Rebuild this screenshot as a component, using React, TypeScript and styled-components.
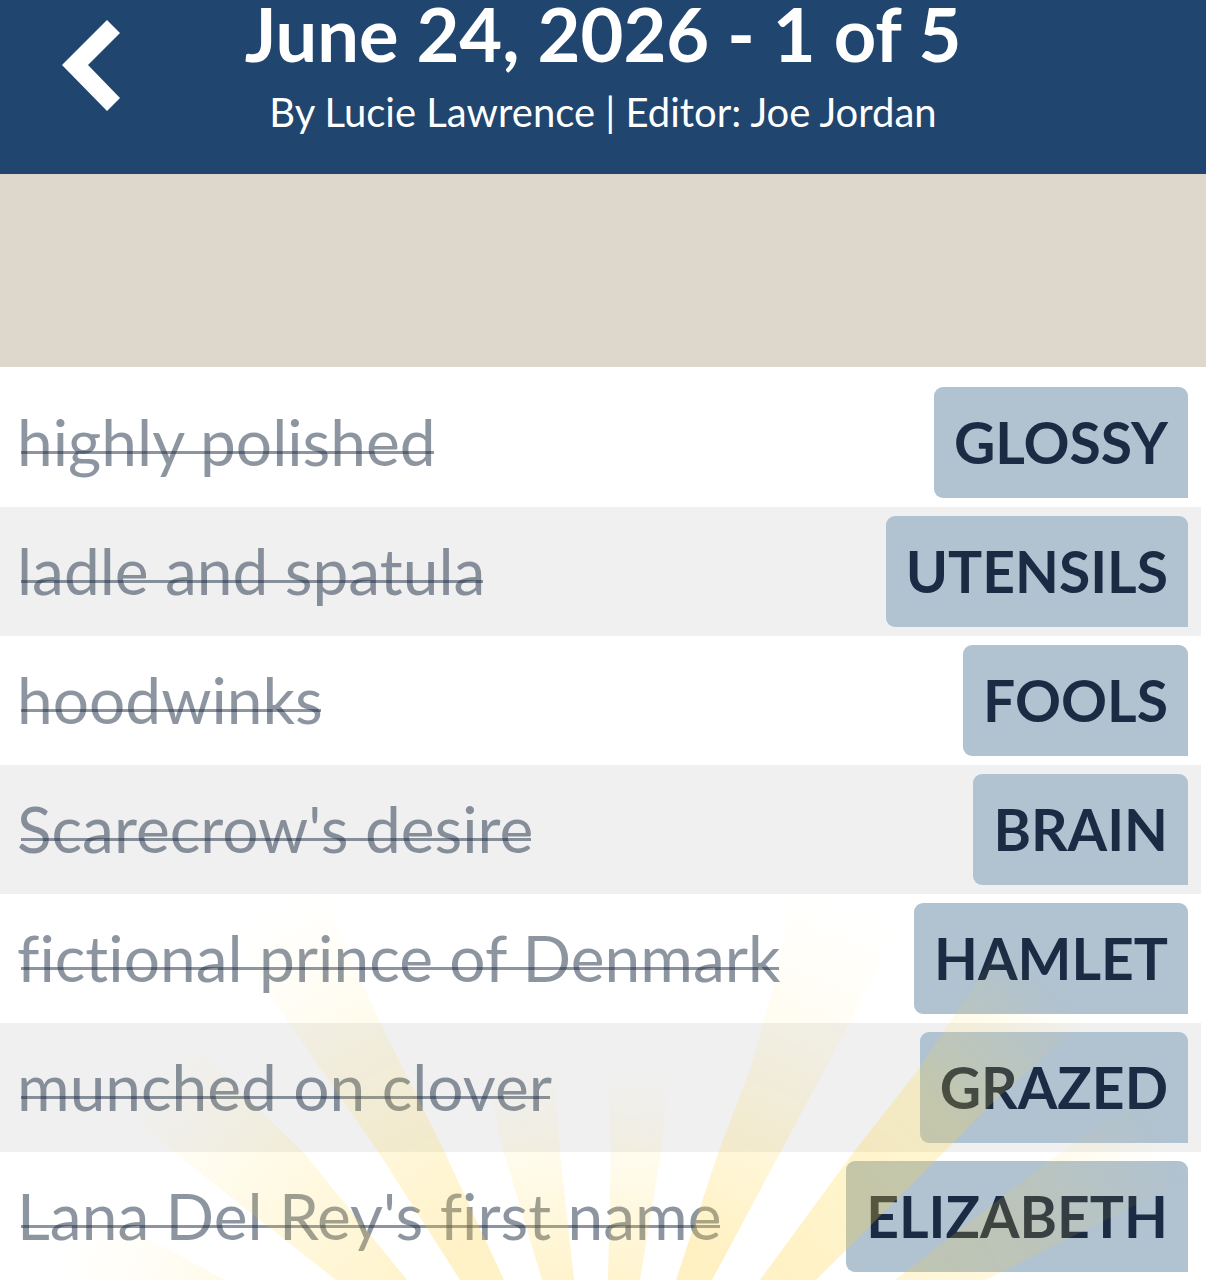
import React from "react";
import styled, { createGlobalStyle } from "styled-components";

const GlobalStyle = createGlobalStyle`
  *, *::before, *::after { box-sizing: border-box; }
  body {
    margin: 0;
    background: #fff;
    color: #1c2b44;
    font-family: Lato, "Open Sans", sans-serif;
    font-variant-ligatures: none;
  }
`;

const Page = styled.div`
  height: 100vh;
  overflow: hidden;
`;

const Header = styled.header`
  display: grid;
  grid-template-columns: 184px 1fr 184px;
  height: 174px;
  background: #20456f;
  color: #fff;
`;

const BackButton = styled.button`
  justify-self: start;
  align-self: start;
  margin: 20px 0 0 61px;
  padding: 0;
  border: 0;
  background: none;
  color: inherit;
  line-height: 0;
  cursor: pointer;
`;

const Heading = styled.div`
  text-align: center;
  white-space: nowrap;
`;

const Title = styled.h1`
  margin: 0;
  font-size: 74px;
  font-weight: 700;
  line-height: 68px;
`;

const Byline = styled.p`
  margin: 20px 0 0;
  font-size: 40px;
  font-weight: 400;
  line-height: 48px;
`;

const Banner = styled.div`
  height: 193px;
  background: #ded7cc;
`;

const ClueList = styled.ul`
  margin: 0;
  padding: 11px 5px 0 0;
  list-style: none;
`;

const ClueRow = styled.li`
  display: flex;
  align-items: center;
  justify-content: space-between;
  height: 129px;
  padding: 0 13px 0 17px;

  &:nth-child(even) { background: #f0f0f0; }
`;

const Clue = styled.s`
  position: relative;
  padding-bottom: 2px;
  color: rgba(28, 43, 68, 0.5);
  font-size: 64px;
  line-height: 80px;
  text-decoration: none;
  white-space: nowrap;

  &::after {
    content: "";
    position: absolute;
    left: 4px;
    right: 2px;
    top: 49px;
    height: 3px;
    background: rgba(28, 43, 68, 0.5);
  }
`;

const Answer = styled.span`
  padding: 0 20px;
  border-radius: 9px 9px 0 9px;
  background: #b1c2d1;
  font-size: 57px;
  font-weight: 700;
  line-height: 111px;
`;

const Burst = styled.svg`
  position: fixed;
  left: 0;
  bottom: 0;
  width: 100%;
  pointer-events: none;
`;

const clues = [
  { clue: "highly polished", answer: "GLOSSY" },
  { clue: "ladle and spatula", answer: "UTENSILS" },
  { clue: "hoodwinks", answer: "FOOLS" },
  { clue: "Scarecrow's desire", answer: "BRAIN" },
  { clue: "fictional prince of Denmark", answer: "HAMLET" },
  { clue: "munched on clover", answer: "GRAZED" },
  { clue: "Lana Del Rey's first name", answer: "ELIZABETH" },
];

// Each ray: its outline, the radius at which it fades out, its strength near
// the centre, and its strength three quarters of the way out.
const rays = [
  { d: "M225 400 L145 357 L50 310 L0 350 L0 400Z", reach: 590, inner: 0.26, outer: 0.09 },
  { d: "M407 400 L304 273 L208 180 L140 110 L30 170 L115 225 L175 273 L336 400Z", reach: 610, inner: 0.28, outer: 0.12 },
  { d: "M504 400 L445 273 L379 140 L320 10 L210 10 L250 80 L287 140 L379 273 L460 400Z", reach: 670, inner: 0.28, outer: 0.1 },
  { d: "M574 400 L560 273 L550 130 L470 130 L504 273 L542 400Z", reach: 430, inner: 0.3, outer: 0.11 },
  { d: "M640 400 L661 273 L674 150 L607 150 L611 273 L608 400Z", reach: 420, inner: 0.3, outer: 0.11 },
  { d: "M712 400 L780 273 L849 144 L910 20 L790 20 L775 100 L751 187 L718 273 L676 400Z", reach: 640, inner: 0.3, outer: 0.08 },
  { d: "M816 400 L943 273 L995 220 L1064 160 L1190 50 L1060 0 L1010 50 L968 115 L918 190 L853 273 L760 400Z", reach: 680, inner: 0.28, outer: 0.23 },
  { d: "M985 400 L1206 290 L1206 185 L1130 225 L1050 280 L895 400Z", reach: 670, inner: 0.24, outer: 0.14 },
];

function SunBurst() {
  return (
    <Burst viewBox="0 0 1206 400" aria-hidden="true">
      <defs>
        {rays.map((ray, i) => (
          <radialGradient key={i} id={`ray${i}`} gradientUnits="userSpaceOnUse" cx="600" cy="610" r={ray.reach}>
            <stop offset="0.4" stopColor="#ffce32" stopOpacity={ray.inner} />
            <stop offset="0.75" stopColor="#ffd632" stopOpacity={ray.outer} />
            <stop offset="1" stopColor="#ffe650" stopOpacity="0" />
          </radialGradient>
        ))}
      </defs>
      {rays.map((ray, i) => (
        <path key={i} d={ray.d} fill={`url(#ray${i})`} />
      ))}
    </Burst>
  );
}

export default function App() {
  return (
    <Page>
      <GlobalStyle />
      <Header>
        <BackButton aria-label="Back">
          <svg width="60" height="92" viewBox="0 0 60 92" aria-hidden="true">
            <path d="M46 0 L59 13 L27 45 L59 78 L46 91 L1 45Z" fill="currentColor" />
          </svg>
        </BackButton>
        <Heading>
          <Title>June 24, 2026 - 1 of 5</Title>
          <Byline>By Lucie Lawrence | Editor: Joe Jordan</Byline>
        </Heading>
      </Header>
      <Banner />
      <main>
        <ClueList>
          {clues.map(({ clue, answer }) => (
            <ClueRow key={answer}>
              <Clue>{clue}</Clue>
              <Answer>{answer}</Answer>
            </ClueRow>
          ))}
        </ClueList>
      </main>
      <SunBurst />
    </Page>
  );
}
